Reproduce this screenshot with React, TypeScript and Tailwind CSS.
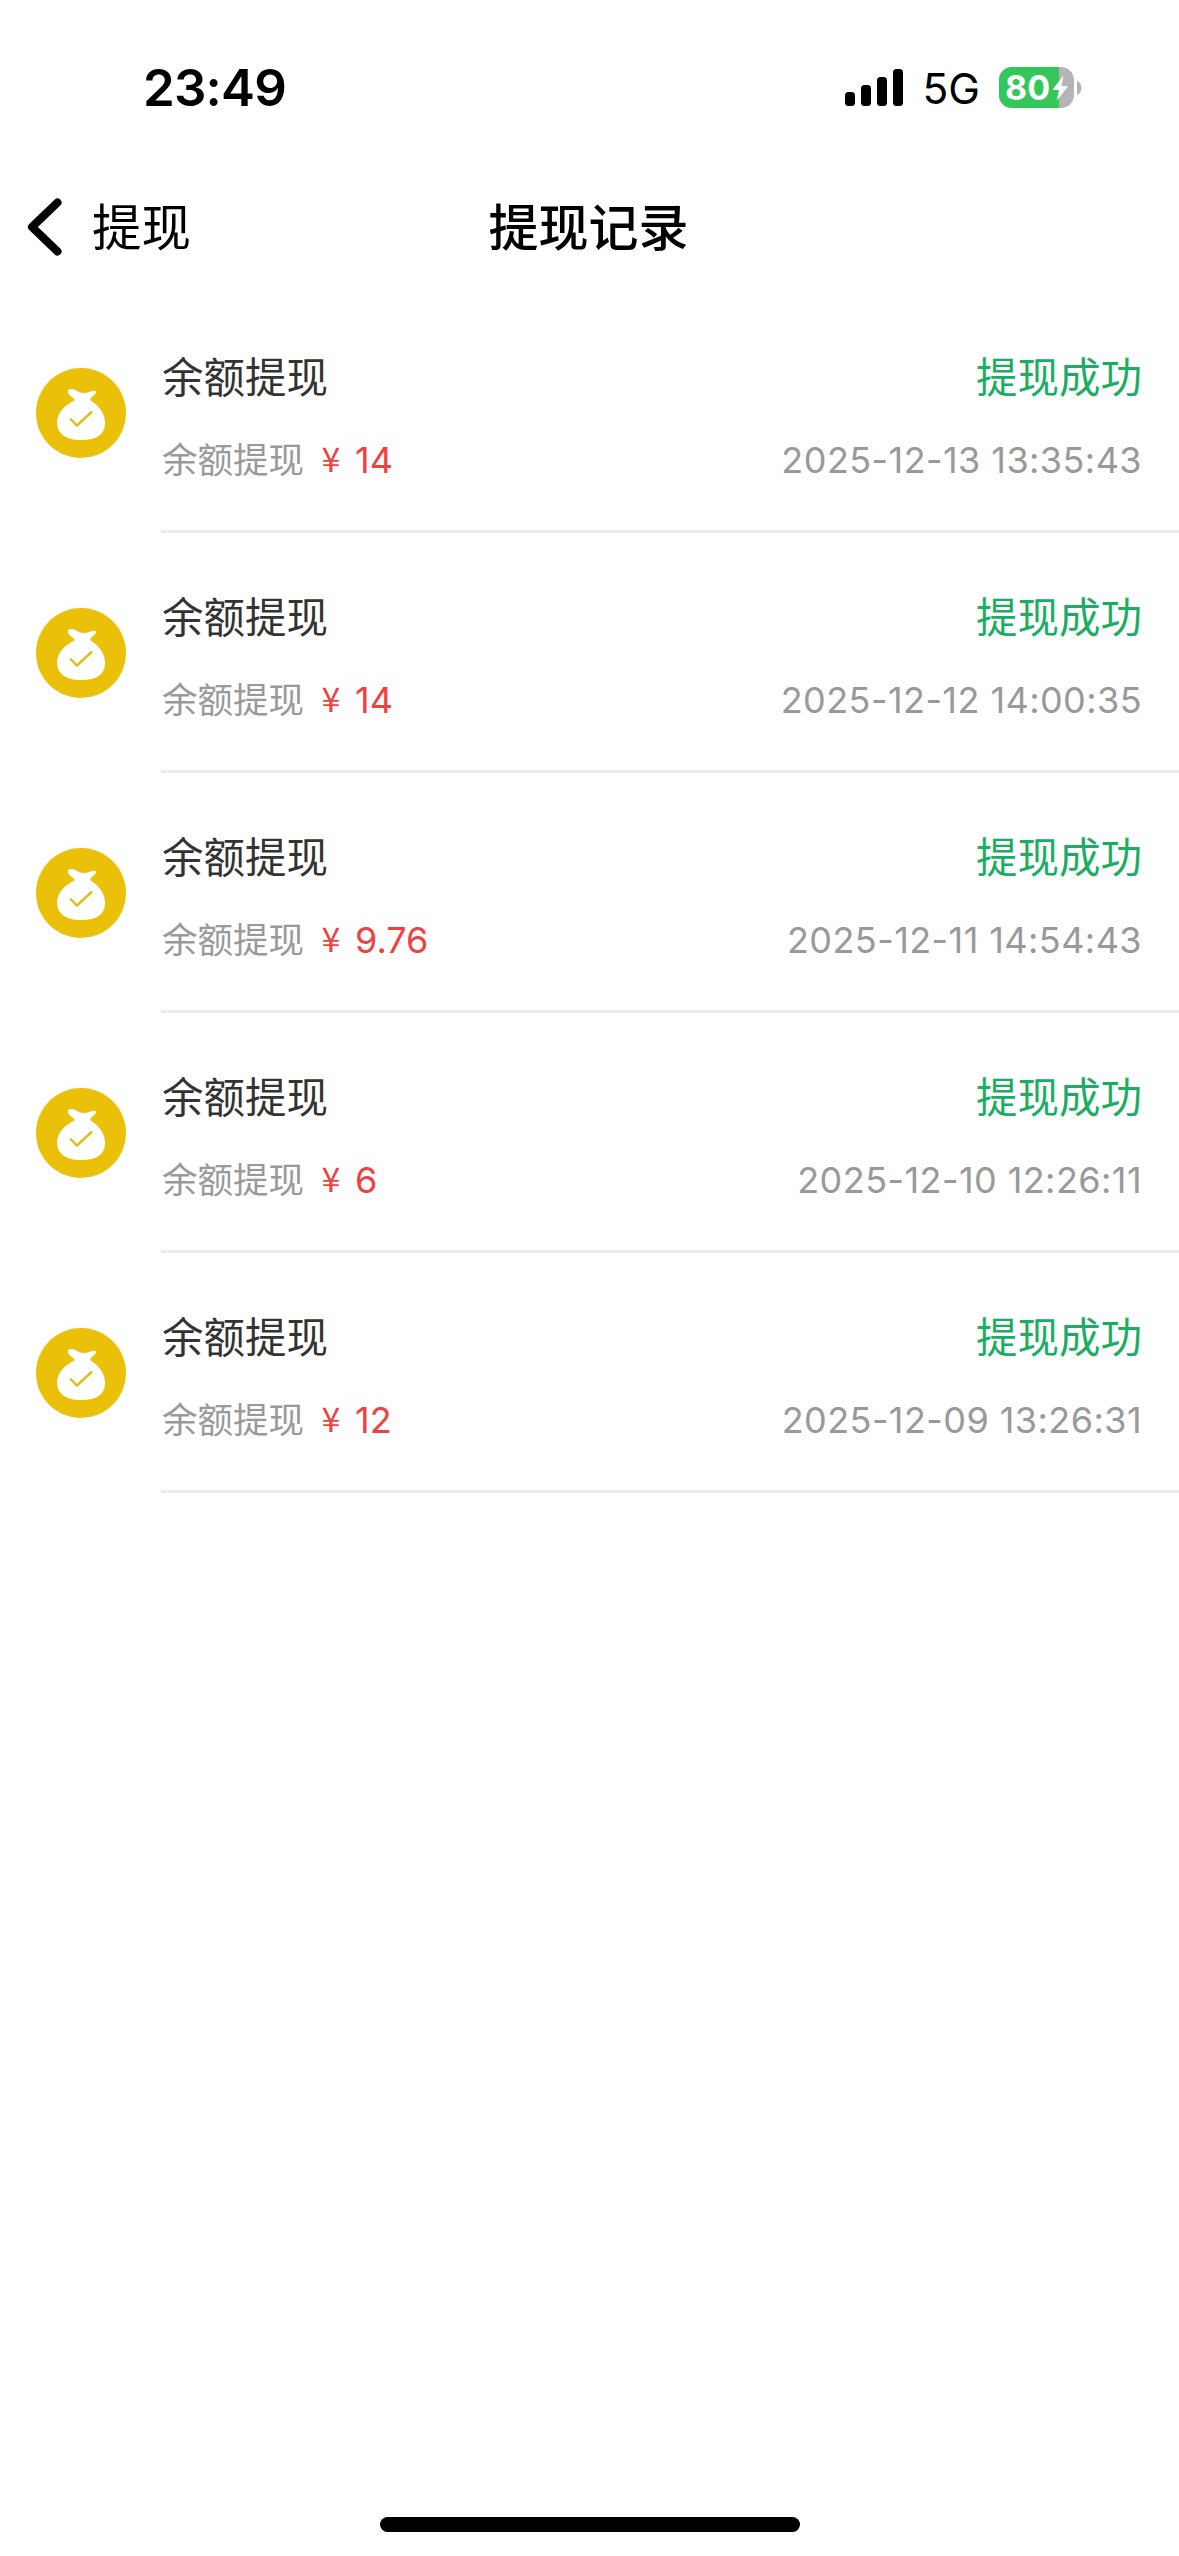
const records = [
  { amount: '14', time: '2025-12-13 13:35:43' },
  { amount: '14', time: '2025-12-12 14:00:35' },
  { amount: '9.76', time: '2025-12-11 14:54:43' },
  { amount: '6', time: '2025-12-10 12:26:11' },
  { amount: '12', time: '2025-12-09 13:26:31' },
];

function SignalIcon() {
  return (
    <svg width="58" height="37" viewBox="0 0 58 37">
      <rect x="0" y="23" width="10" height="14" rx="3.5" />
      <rect x="16" y="16" width="10" height="21" rx="3.5" />
      <rect x="32" y="8" width="10" height="29" rx="3.5" />
      <rect x="48" y="0" width="10" height="37" rx="3.5" />
    </svg>
  );
}

function Battery() {
  return (
    <div className="flex items-center">
      <div className="relative h-[41px] w-[75px] overflow-hidden rounded-[13px] bg-[#b5b5b5]">
        <div className="flex h-full w-[60px] items-center bg-[#34c759] pl-[6px] text-[34px] leading-none font-bold text-white">
          80
        </div>
        <svg className="absolute top-[8px] left-[53px]" width="17" height="27" viewBox="0 0 17 27">
          <path d="M11.5 0.5 L0.8 14.2 Q0.4 15 1.3 15 H7 L4.6 26 L15.6 11.8 Q16 11 15.1 11 H9.6 Z" fill="#fff" />
        </svg>
      </div>
      <svg className="ml-[3px]" width="5" height="14" viewBox="0 0 5 14">
        <path d="M0 0 Q4.5 2 4.5 7 T0 14 Z" fill="#b5b5b5" />
      </svg>
    </div>
  );
}

function MoneyBag() {
  return (
    <svg className="ml-[36px] shrink-0" width="90" height="90" viewBox="0 0 90 90">
      <circle cx="45" cy="45" r="45" fill="#ebc008" />
      <path
        d="M32 23 C32 20.5 36 20.5 40 22.500 C44 24.500 46 25.500 49 25 C53 24 56 22.5 59 23 C61.5 23.8 59.5 26 57 28 C55 29.8 53.5 31 54.5 32.5 C63 37 69 46 69 54.5 C69 67 60 72 45 72 C30 72 21 66 21 54.5 C21 46 27.500 37.500 38 32.800 C40 31.500 37 30 35 28.500 C33 27 32 25 32 23 Z"
        fill="#fff"
      />
      <path d="M34 50.500 L41 57.500 L56 43.500" fill="none" stroke="#e2bd1c" strokeWidth="2.400" />
    </svg>
  );
}

function RecordRow({ amount, time }: { amount: string; time: string }) {
  return (
    <li className="flex h-[240px] items-center">
      <MoneyBag />
      <div className="ml-[35px] flex h-full flex-1 flex-col border-b-[3px] border-[#ededed] pt-[54px] pr-[38px]">
        <div className="flex h-[62px] items-center justify-between text-[41.500px]">
          <span className="pl-[1px] text-[#333333]">余额提现</span>
          <span className="-mr-[1px] text-[#1aad63]">提现成功</span>
        </div>
        <div className="mt-[21px] flex h-[60px] items-center justify-between">
          <div className="flex items-center pl-[1px]">
            <span className="pt-[2px] text-[35.500px] text-[#999999]">余额提现</span>
            <span className="ml-[9px] flex items-center text-[36px] text-[#f04142]">
              <span className="w-[36px] pb-[5px] text-center font-['Noto_Sans_CJK_SC'] text-[34px] leading-none">¥</span>
              <span className="ml-[6px]">{amount}</span>
            </span>
          </div>
          <span className="-mr-[1px] text-[36px] tracking-[0.430px] text-[#999999]">{time}</span>
        </div>
      </div>
    </li>
  );
}

export default function App() {
  return (
    <div className="flex h-[2556px] w-[1179px] flex-col bg-white font-[Inter,'Noto_Sans_CJK_SC',sans-serif] text-black">
      <header className="flex h-[175px] items-center justify-between pr-[97px] pl-[143px]">
        <span className="text-[51px] leading-none font-semibold tracking-[-0.800px]">23:49</span>
        <div className="flex items-center">
          <SignalIcon />
          <span className="mr-[19px] ml-[19px] pt-[4px] text-[42.500px] leading-none">5G</span>
          <Battery />
        </div>
      </header>
      <nav className="grid h-[103px] grid-cols-[1fr_auto_1fr] items-center">
        <div className="flex items-center pl-[27px]">
          <svg width="36" height="58" viewBox="0 0 36 58">
            <path d="M30.500 4.500 L5 29 L30.500 53.500" fill="none" stroke="#000" strokeWidth="8" strokeLinecap="round" strokeLinejoin="round" />
          </svg>
          <span className="ml-[29px] pt-[4px] text-[49.500px] leading-none">提现</span>
        </div>
        <h1 className="pt-[3px] pr-[2px] text-[50px] leading-none font-medium">提现记录</h1>
      </nav>
      <ul className="mt-[15px] flex-1">
        {records.map((r) => (
          <RecordRow key={r.time} amount={r.amount} time={r.time} />
        ))}
      </ul>
      <div className="mx-auto mb-[24px] h-[15px] w-[420px] rounded-full bg-black" />
    </div>
  );
}
